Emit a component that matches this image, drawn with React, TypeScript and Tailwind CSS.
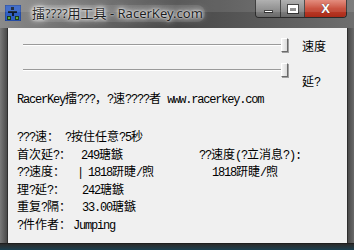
import React from "react";

// mixed text: ascii runs in a narrow mono, cjk runs in 12px cjk font
function Mixed({ text }: { text: string }) {
  const parts = text.match(/[\x00-\x7f]+|[^\x00-\x7f]+/g) ?? [];
  return (
    <>
      {parts.map((p, i) =>
        /^[\x00-\x7f]/.test(p) ? (
          <span key={i} className="font-['Liberation_Mono',monospace] text-[12px] tracking-[-1.2px]">
            {p}
          </span>
        ) : (
          <span key={i} className="font-['Noto_Sans_CJK_SC',sans-serif] text-[12px]">
            {p}
          </span>
        )
      )}
    </>
  );
}

function AppIcon() {
  return (
    <svg width="16" height="16" viewBox="0 0 16 16">
      <rect x="0" y="0" width="16" height="16" fill="#2f5fc4" />
      <rect x="0" y="0" width="16" height="16" fill="none" stroke="#1b3b86" />
      <path d="M6 2h3v3H6z M3 6h9v2H3z M7 8h2v3H7z" fill="#0d1a2e" />
      <path d="M2 11h4v4H2z M10 11h4v4h-4z" fill="#1f3a1a" />
      <path d="M3 12h2v2H3z M11 12h2v2h-2z" fill="#5fae3c" />
    </svg>
  );
}

function Slider({ label, labelClass }: { label: string; labelClass: string }) {
  return (
    <div className="flex items-start h-[14px]">
      <div className="flex items-center w-[280px] h-[14px] pl-[15px]">
        <div className="flex-1 h-[2px] border-t border-[#9a9a9a] border-b border-b-white" />
        <div className="w-[7px] h-[14px] bg-gradient-to-r from-[#f4f4f4] to-[#dcdcdc] border-l border-t border-white border-r border-r-[#6a6a6a] border-b border-b-[#6a6a6a] shadow-[1px_1px_0_#a0a0a0]" />
      </div>
      <div className={"ml-[14px] leading-[14px] " + labelClass}>
        <Mixed text={label} />
      </div>
    </div>
  );
}

function Row({ children }: { children: React.ReactNode }) {
  return <div className="flex items-baseline h-[17.5px] leading-[17.5px] whitespace-pre text-black">{children}</div>;
}

export default function App() {
  return (
    <div className="w-[354px] h-[250px] bg-[#5c5c5c] flex flex-col overflow-hidden">
      {/* title bar */}
      <div className="relative h-[28px] flex items-start bg-gradient-to-r from-[#8a8a8a] via-[#484848] to-[#6e6e6e]">
        <div className="absolute inset-x-0 top-0 h-[12px] bg-white/10" />
        <div className="mt-[5px] ml-[5px]">
          <AppIcon />
        </div>
        <div className="ml-[9px] mt-[5px] px-[2px] text-[13px] leading-[17px] text-[#1c1c1c] font-['Noto_Sans','Noto_Sans_CJK_SC',sans-serif] rounded-[8px] bg-white/10 [text-shadow:0_0_5px_#ffffff,0_0_9px_#ffffff,0_0_2px_#ffffff]">
          擂????用工具 - RacerKey.com
        </div>
        <div className="ml-auto mr-[7px] flex h-[18px] border border-t-0 border-[#2a2a2a] rounded-b-[4px] overflow-hidden">
          <div className="w-[25px] flex items-center justify-center bg-gradient-to-b from-[#a8a8a8] to-[#6a6a6a] border-r border-[#3a3a3a]">
            <div className="w-[9px] h-[3px] mt-[5px] bg-white border border-[#333]" />
          </div>
          <div className="w-[24px] flex items-center justify-center bg-gradient-to-b from-[#a8a8a8] to-[#6a6a6a] border-r border-[#3a3a3a]">
            <div className="w-[10px] h-[8px] border-2 border-t-[3px] border-white outline outline-1 outline-[#333]" />
          </div>
          <div className="w-[41px] flex items-center justify-center bg-gradient-to-b from-[#e08070] via-[#c4402c] to-[#a82a18]">
            <span className="text-white text-[13px] font-bold leading-none font-['Liberation_Sans',sans-serif] [text-shadow:0_0_1px_#222]">X</span>
          </div>
        </div>
      </div>

      {/* body */}
      <div className="flex flex-1">
        <div className="w-[8px] bg-gradient-to-r from-[#7a7a7a] to-[#4a4a4a] border-r border-[#2e2e2e]" />
        <div className="flex-1 bg-[#f0f0f0] flex flex-col pt-[10px] pl-[9px]">
          <div className="-ml-[9px]">
            <Slider label="速度" labelClass="" />
            <div className="h-[11px]" />
            <Slider label="延?" labelClass="mt-[10px]" />
          </div>
          <div className="mt-[12px] h-[17px] flex items-baseline leading-[17px] whitespace-pre">
            <Mixed text="RacerKey擂???，?速????者 www.racerkey.com" />
          </div>
          <div className="mt-[21px] flex flex-col">
            <Row>
              <span className="w-[48px]"><Mixed text="???速：" /></span>
              <Mixed text="?按住任意?5秒" />
            </Row>
            <Row>
              <span className="w-[64px]"><Mixed text="首次延?：" /></span>
              <span className="w-[118px]"><Mixed text="249瑭鏃" /></span>
              <Mixed text="??速度(?立消息?):" />
            </Row>
            <Row>
              <span className="w-[60px]"><Mixed text="??速度：" /></span>
              <span className="w-[11px]"><Mixed text="|" /></span>
              <span className="w-[124px]"><Mixed text="1818趼睫/煦" /></span>
              <Mixed text="1818趼睫/煦" />
            </Row>
            <Row>
              <span className="w-[65px]"><Mixed text="理?延?：" /></span>
              <Mixed text="242瑭鏃" />
            </Row>
            <Row>
              <span className="w-[65px]"><Mixed text="重复?隔：" /></span>
              <Mixed text="33.00瑭鏃" />
            </Row>
            <Row>
              <span className="w-[56px]"><Mixed text="?件作者：" /></span>
              <Mixed text="Jumping" />
            </Row>
          </div>
        </div>
        <div className="w-[7px] bg-gradient-to-r from-[#4a4a4a] to-[#6a6a6a] border-l border-[#2e2e2e]" />
      </div>
      <div className="h-[7px] bg-gradient-to-b from-[#2a2a2a] to-[#1a4050] border-t border-[#1e1e1e]" />
    </div>
  );
}
